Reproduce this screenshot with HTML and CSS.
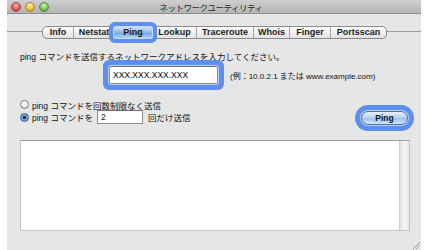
FILE: index.html
```html
<!DOCTYPE html>
<html lang="ja">
<head>
    <meta charset="UTF-8">
    <title>ネットワークユーティリティ</title>
    <link rel="stylesheet" href="styles.css">
</head>
<body>
    <div class="window">
        <div class="titlebar">
            <div class="lights">
                <span class="light red"></span>
                <span class="light yellow"></span>
                <span class="light green"></span>
            </div>
            <div class="title">ネットワークユーティリティ</div>
        </div>

        <div class="tabbar">
            <div class="tabs">
                <span class="tab tab-info">Info</span>
                <span class="tab tab-netstat">Netstat</span>
                <span class="tab tab-ping active">Ping</span>
                <span class="tab tab-lookup">Lookup</span>
                <span class="tab tab-trace">Traceroute</span>
                <span class="tab tab-whois">Whois</span>
                <span class="tab tab-finger">Finger</span>
                <span class="tab tab-ports">Portsscan</span>
            </div>
        </div>

        <div class="content">
            <p class="prompt">ping コマンドを送信するネットワークアドレスを入力してください。</p>

            <div class="address-row">
                <div class="field address focused">XXX.XXX.XXX.XXX</div>
                <span class="hint">(例：10.0.2.1 または www.example.com)</span>
            </div>

            <div class="options-row">
                <div class="options">
                    <div class="option">
                        <span class="radio"></span>
                        <span>ping コマンドを回数制限なく送信</span>
                    </div>
                    <div class="option">
                        <span class="radio on"></span>
                        <span>ping コマンドを</span>
                        <span class="field count">2</span>
                        <span>回だけ送信</span>
                    </div>
                </div>
                <span class="button focused">Ping</span>
            </div>

            <div class="output">
                <div class="scrollbar"></div>
            </div>
        </div>

        <div class="grip"></div>
    </div>
</body>
</html>
```

FILE: styles.css
```css
body {
    margin: 0;
    padding: 0;
    background: #ffffff;
    font-family: 'Liberation Sans', 'Noto Sans CJK JP', sans-serif;
    font-size: 8.5px;
    color: #111111;
}

.window {
    position: relative;
    width: 414px;
    height: 250px;
    margin-left: 7px;
    background: #e6e6e6;
    overflow: hidden;
}

/* title bar */
.titlebar {
    display: flex;
    align-items: center;
    height: 13px;
    background: linear-gradient(#cfcfcf, #b5b5b5);
    border-bottom: 1px solid #8e8e8e;
}

.lights {
    display: flex;
    gap: 4px;
    padding-left: 4px;
    width: 100px;
}

.light {
    width: 10px;
    height: 10px;
    border-radius: 50%;
    box-sizing: border-box;
}

.light.red {
    background: radial-gradient(circle at 50% 30%, #fbb 0, #e45858 55%, #b83232 100%);
    border: 1px solid #a84040;
}

.light.yellow {
    background: radial-gradient(circle at 50% 30%, #fff0b0 0, #eebd3e 55%, #c08a1c 100%);
    border: 1px solid #a8822c;
}

.light.green {
    background: radial-gradient(circle at 50% 30%, #d8f5c0 0, #78c45a 55%, #4a9032 100%);
    border: 1px solid #4c8a38;
}

.title {
    flex: 1;
    margin-right: 110px;
    text-align: center;
    font-family: 'Noto Sans CJK JP', sans-serif;
    font-size: 8.5px;
    letter-spacing: -0.5px;
    color: #2a2a2a;
}

/* segmented tabs */
.tabbar {
    padding-top: 12px;
    background: linear-gradient(#9c9c9c, #9c9c9c) no-repeat 0 17px / 100% 1px;
}

.tabs {
    display: flex;
    margin-left: 35px;
    width: max-content;
    border: 1px solid #8a8a8a;
    border-radius: 5px;
    background: linear-gradient(#ffffff, #ededed 60%, #e2e2e2);
}

.tab {
    box-sizing: border-box;
    height: 11px;
    line-height: 11px;
    text-align: center;
    font-weight: bold;
    font-size: 9px;
    color: #1a1a1a;
    border-left: 1px solid #a4a4a4;
}

.tab-info { width: 30px; border-left: none; }
.tab-netstat { width: 41px; }
.tab-ping { width: 38px; }
.tab-lookup { width: 44px; }
.tab-trace { width: 57px; }
.tab-whois { width: 36px; }
.tab-finger { width: 41px; }
.tab-ports { width: 56px; }

.tab.active {
    position: relative;
    border-left: none;
    background: linear-gradient(#cfe2f8, #8ab8ec 50%, #6fa6e4 55%, #b5d4f5);
    border-radius: 2px;
    box-shadow: 0 0 0 1px #c6d9fa, 0 0 0 5px #5e8fee;
}

/* form */
.content {
    padding: 0 11px 0 13px;
}

.prompt {
    margin: 12px 0 0;
    line-height: 12px;
}

.address-row {
    display: flex;
    align-items: center;
    margin-top: 3px;
}

.field {
    box-sizing: border-box;
    background: #ffffff;
    border: 1px solid #8c8c8c;
    border-top-color: #6e6e6e;
}

.focused {
    position: relative;
    box-shadow: 0 0 0 1px #b9cff7, 0 0 0 6px #5e8fee;
    border-radius: 2px;
}

.address {
    width: 109px;
    height: 18px;
    margin-left: 89px;
    padding-left: 3px;
    line-height: 16px;
    font-size: 8.5px;
    color: #000;
}

.hint {
    margin-left: 12px;
    font-size: 8px;
}

.options-row {
    display: flex;
    justify-content: space-between;
    align-items: flex-start;
    margin-top: 15px;
}

.option {
    display: flex;
    align-items: center;
    gap: 3px;
    height: 11px;
}

.option + .option {
    height: 14px;
}

.radio {
    box-sizing: border-box;
    width: 9px;
    height: 9px;
    border-radius: 50%;
    border: 1px solid #7a7a7a;
    background: linear-gradient(#ffffff, #e0e0e0);
}

.radio.on {
    border-color: #3d5f8c;
    background: radial-gradient(circle, #1c2d44 0, #1c2d44 1.5px, #7fb0ea 2px, #4a86d6 100%);
}

.count {
    width: 46px;
    height: 14px;
    margin: 0 2px 0 1px;
    padding-left: 3px;
    line-height: 12px;
}

.button {
    box-sizing: border-box;
    width: 47px;
    height: 14px;
    margin-top: 12px;
    margin-right: 2px;
    line-height: 12px;
    text-align: center;
    font-weight: bold;
    border: 1px solid #4f72a0;
    border-radius: 7px;
    background: linear-gradient(#e4effb, #b3d1f2 50%, #9cc2ee 55%, #d2e6fb);
}

.button.focused {
    border-radius: 7px;
    box-shadow: 0 0 0 1px #b9cff7, 0 0 0 6px #5e8fee;
}

.output {
    display: flex;
    justify-content: flex-end;
    box-sizing: border-box;
    height: 91px;
    margin-top: 15px;
    background: #ffffff;
    border: 1px solid #c4c4c4;
    border-top-color: #a0a0a0;
}

.scrollbar {
    width: 9px;
    background: linear-gradient(90deg, #e2e2e2, #f6f6f6 50%, #e6e6e6);
    border-left: 1px solid #d0d0d0;
}

.grip {
    position: absolute;
    right: 1px;
    bottom: 1px;
    width: 7px;
    height: 7px;
    background: linear-gradient(135deg, transparent 45%, #9a9a9a 45%, #9a9a9a 52%, transparent 52%, transparent 68%, #9a9a9a 68%, #9a9a9a 75%, transparent 75%);
}
```
